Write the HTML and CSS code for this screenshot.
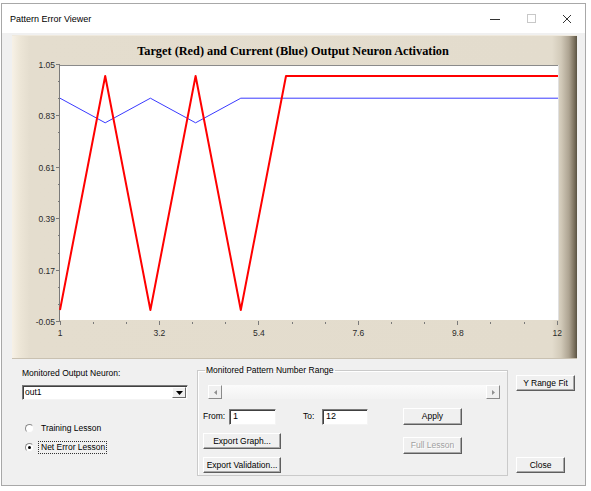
FILE: index.html
```html
<!DOCTYPE html>
<html>
<head>
<meta charset="utf-8">
<title>Pattern Error Viewer</title>
<link rel="stylesheet" href="styles.css">
</head>
<body>
<div class="window">
  <div class="titlebar">
    <span class="title">Pattern Error Viewer</span>
    <div class="caption-buttons">
      <span class="cap"><svg width="10" height="10" viewBox="0 0 10 10"><line x1="0" y1="5.5" x2="10" y2="5.5" stroke="#333" stroke-width="1"/></svg></span>
      <span class="cap"><svg width="9" height="9" viewBox="0 0 9 9"><rect x="0.5" y="0.5" width="8" height="8" fill="none" stroke="#c8c8c8" stroke-width="1"/></svg></span>
      <span class="cap"><svg width="10" height="10" viewBox="0 0 10 10"><path d="M1 1L9 9M9 1L1 9" stroke="#333" stroke-width="1" fill="none"/></svg></span>
    </div>
  </div>
  <div class="client">
    <div class="chart-panel">
      <svg class="chart" width="565" height="324" viewBox="0 0 565 324">
        <text class="ctitle" x="281" y="20" text-anchor="middle">Target (Red) and Current (Blue) Output Neuron Activation</text>
        <rect x="48" y="30" width="498" height="255" fill="#fff"/>
        <line x1="48" y1="30.5" x2="546" y2="30.5" stroke="#8a8a8a" stroke-width="1"/>
        <line x1="546.5" y1="30" x2="546.5" y2="285" stroke="#e0e0e0" stroke-width="1"/>
        <line x1="47.5" y1="30" x2="47.5" y2="287" stroke="#7a7a7a" stroke-width="1"/>
        <g stroke="#7a7a7a" stroke-width="1">
          <line x1="44" y1="29.5" x2="48" y2="29.5"/>
          <line x1="46" y1="46.5" x2="48" y2="46.5"/>
          <line x1="46" y1="63.5" x2="48" y2="63.5"/>
          <line x1="44" y1="80.5" x2="48" y2="80.5"/>
          <line x1="46" y1="97.5" x2="48" y2="97.5"/>
          <line x1="46" y1="114.5" x2="48" y2="114.5"/>
          <line x1="44" y1="132.5" x2="48" y2="132.5"/>
          <line x1="46" y1="149.5" x2="48" y2="149.5"/>
          <line x1="46" y1="166.5" x2="48" y2="166.5"/>
          <line x1="44" y1="183.5" x2="48" y2="183.5"/>
          <line x1="46" y1="200.5" x2="48" y2="200.5"/>
          <line x1="46" y1="218.5" x2="48" y2="218.5"/>
          <line x1="44" y1="235.5" x2="48" y2="235.5"/>
          <line x1="46" y1="252.5" x2="48" y2="252.5"/>
          <line x1="46" y1="269.5" x2="48" y2="269.5"/>
          <line x1="44" y1="286.5" x2="48" y2="286.5"/>
        </g>
        <g stroke="#7a7a7a" stroke-width="1">
          <line x1="48.5" y1="286" x2="48.5" y2="290"/>
          <line x1="81.5" y1="287" x2="81.5" y2="289"/>
          <line x1="114.5" y1="287" x2="114.5" y2="289"/>
          <line x1="147.5" y1="286" x2="147.5" y2="290"/>
          <line x1="180.5" y1="287" x2="180.5" y2="289"/>
          <line x1="213.5" y1="287" x2="213.5" y2="289"/>
          <line x1="246.5" y1="286" x2="246.5" y2="290"/>
          <line x1="280.5" y1="287" x2="280.5" y2="289"/>
          <line x1="313.5" y1="287" x2="313.5" y2="289"/>
          <line x1="346.5" y1="286" x2="346.5" y2="290"/>
          <line x1="379.5" y1="287" x2="379.5" y2="289"/>
          <line x1="412.5" y1="287" x2="412.5" y2="289"/>
          <line x1="445.5" y1="286" x2="445.5" y2="290"/>
          <line x1="478.5" y1="287" x2="478.5" y2="289"/>
          <line x1="512.5" y1="287" x2="512.5" y2="289"/>
          <line x1="545.5" y1="286" x2="545.5" y2="290"/>
        </g>
        <g class="axlbl" text-anchor="end">
          <text x="43" y="32.5">1.05</text>
          <text x="43" y="84">0.83</text>
          <text x="43" y="135.5">0.61</text>
          <text x="43" y="187">0.39</text>
          <text x="43" y="238.5">0.17</text>
          <text x="43" y="290">-0.05</text>
        </g>
        <g class="axlbl" text-anchor="middle">
          <text x="48" y="300.5">1</text>
          <text x="147.4" y="300.5">3.2</text>
          <text x="246.9" y="300.5">5.4</text>
          <text x="346.3" y="300.5">7.6</text>
          <text x="445.8" y="300.5">9.8</text>
          <text x="545.2" y="300.5">12</text>
        </g>
        <polyline points="48,63.2 93.2,87.8 138.4,63.2 183.6,87.8 228.8,63.2 546,63.2" fill="none" stroke="#3a3aff" stroke-width="1"/>
        <polyline points="48,275 93.2,41 138.4,275 183.6,41 228.8,275 274,41 546,41" fill="none" stroke="#ff0000" stroke-width="2" stroke-linejoin="round"/>
      </svg>
    </div>
    <div class="controls">
      <div class="col-left">
        <div class="lbl">Monitored Output Neuron:</div>
        <div class="combo">
          <span class="combo-text">out1</span>
          <span class="combo-btn"><svg width="7" height="4" viewBox="0 0 7 4"><path d="M0 0H7L3.5 4Z" fill="#000"/></svg></span>
        </div>
        <div class="radio first"><span class="radio-circle"></span><span class="radio-text">Training Lesson</span></div>
        <div class="radio second"><span class="radio-circle checked"></span><span class="radio-text focus">Net Error Lesson</span></div>
      </div>
      <fieldset class="group">
        <legend>Monitored Pattern Number Range</legend>
        <div class="scrollbar">
          <span class="sb-btn"><svg width="3" height="5" viewBox="0 0 3 5"><path d="M3 0V5L0 2.5Z" fill="#909090"/></svg></span>
          <span class="sb-track"></span>
          <span class="sb-btn"><svg width="3" height="5" viewBox="0 0 3 5"><path d="M0 0V5L3 2.5Z" fill="#909090"/></svg></span>
        </div>
        <div class="row-a">
          <span class="flabel from">From:</span>
          <span class="field w47">1</span>
          <span class="flabel to">To:</span>
          <span class="field w46">12</span>
          <span class="btn apply">Apply</span>
        </div>
        <div class="row-b">
          <div class="export-col">
            <span class="btn export">Export Graph...</span>
            <span class="btn export">Export Validation...</span>
          </div>
          <span class="btn full disabled">Full Lesson</span>
        </div>
      </fieldset>
      <div class="col-right">
        <span class="btn yfit">Y Range Fit</span>
        <span class="btn close">Close</span>
      </div>
    </div>
  </div>
</div>
</body>
</html>
```
FILE: styles.css
```css
* { box-sizing: border-box; }
html, body { margin: 0; padding: 0; background: #fff; }
body {
  width: 591px;
  height: 491px;
  overflow: hidden;
  font-family: "Liberation Sans", Arial, sans-serif;
  font-size: 8.5px;
  color: #000;
}
.window {
  margin: 3px 0 0 1px;
  width: 585px;
  height: 483px;
  border: 1px solid #a8a8a8;
  background: #f0f0f0;
  display: flex;
  flex-direction: column;
}
.titlebar {
  height: 29px;
  background: #fff;
  display: flex;
  align-items: center;
  padding-left: 8px;
  flex: none;
}
.title {
  font-size: 9px;
  color: #000;
}
.caption-buttons {
  margin-left: auto;
  display: flex;
}
.cap {
  width: 36px;
  height: 29px;
  display: flex;
  align-items: center;
  justify-content: center;
}
.client {
  flex: 1;
  padding: 2px 0 0 10px;
  display: flex;
  flex-direction: column;
}
.chart-panel {
  width: 565px;
  height: 324px;
  background: linear-gradient(to right, #f7f1e6 0px, #ede6d7 8px, #e4ddce 18px, #e3dccd 540px, #d2cab9 549px, #ada391 557px, #7d7360 562px, #5a5343 565px);
  box-shadow: inset 0 1px 0 #efe9dd, inset 0 -1px 0 #c9c1b1;
}
.chart { display: block; }
.ctitle {
  font-family: "Liberation Serif", "Times New Roman", serif;
  font-weight: bold;
  font-size: 12.3px;
  fill: #000;
}
.axlbl text {
  font-family: "Liberation Sans", Arial, sans-serif;
  font-size: 8.5px;
  fill: #2a2a2a;
}
.controls {
  display: flex;
  margin-left: 10px;
  flex: 1;
}
.col-left {
  width: 175px;
  padding-top: 9px;
}
.lbl { line-height: 11px; height: 11px; }
.combo {
  margin-top: 6px;
  width: 166px;
  height: 15px;
  background: #fff;
  border: 1px solid;
  border-color: #7a7a7a #f4f4f4 #f4f4f4 #7a7a7a;
  box-shadow: inset 1px 1px 0 #404040;
  display: flex;
  align-items: center;
}
.combo-text { padding-left: 2px; flex: 1; line-height: 11px; }
.combo-btn {
  width: 14px;
  height: 11px;
  margin-right: 1px;
  background: #f0f0f0;
  border: 1px solid;
  border-color: #fff #6a6a6a #6a6a6a #fff;
  display: flex;
  align-items: center;
  justify-content: center;
}
.radio {
  display: flex;
  align-items: center;
  height: 13px;
  line-height: 11px;
}
.radio.first { margin-top: 22px; }
.radio.second { margin-top: 6px; }
.radio-circle {
  width: 9px;
  height: 9px;
  border-radius: 50%;
  margin-left: 3px;
  background: #fff;
  border: 1px solid;
  border-color: #8a8a8a #f0f0f0 #f0f0f0 #8a8a8a;
  position: relative;
  flex: none;
}
.radio-circle.checked::after {
  content: "";
  position: absolute;
  left: 2px;
  top: 2px;
  width: 3px;
  height: 3px;
  border-radius: 50%;
  background: #000;
}
.radio-text { margin-left: 4px; padding: 0 1px 0 2px; border: 1px solid transparent; }
.radio-text.focus { border: 1px dotted #333; }
.group {
  margin: 6px 0 0 0;
  padding: 0 0 2px 0;
  width: 311px;
  height: 111px;
  border: 1px solid #cacaca;
  box-shadow: inset 1px 1px 0 #fff;
  min-inline-size: 0;
}
.group legend {
  margin-left: 7px;
  padding: 0 1px;
  line-height: 11px;
  font-size: 8.5px;
}
.scrollbar {
  margin: 9px 0 0 10px;
  width: 292px;
  height: 14px;
  display: flex;
  background: #f7f7f7;
}
.sb-btn {
  width: 14px;
  height: 14px;
  background: #f0f0f0;
  border: 1px solid;
  border-color: #fff #8a8a8a #8a8a8a #fff;
  display: flex;
  align-items: center;
  justify-content: center;
  flex: none;
}
.sb-track { flex: 1; background: linear-gradient(#fbfbfb, #f2f2f2); }
.row-a {
  margin-top: 9px;
  padding-left: 5px;
  display: flex;
  align-items: center;
  height: 17px;
}
.flabel { line-height: 11px; }
.from { width: 26px; }
.to { width: 19px; margin-left: 27px; }
.field {
  height: 16px;
  background: #fff;
  border: 1px solid;
  border-color: #7a7a7a #f4f4f4 #f4f4f4 #7a7a7a;
  box-shadow: inset 1px 1px 0 #404040;
  padding-left: 3px;
  line-height: 13px;
  font-size: 9px;
}
.w47 { width: 47px; }
.w46 { width: 46px; }
.btn {
  display: flex;
  align-items: center;
  justify-content: center;
  background: #f0f0f0;
  border: 1px solid;
  border-color: #fff #5e5e5e #5e5e5e #fff;
  box-shadow: inset -1px -1px 0 #a8a8a8;
  line-height: 11px;
  white-space: nowrap;
}
.apply { margin-left: 35px; width: 59px; height: 17px; }
.row-b {
  margin-top: 8px;
  padding-left: 5px;
  display: flex;
  align-items: flex-start;
}
.export-col { display: flex; flex-direction: column; gap: 8px; }
.export { width: 78px; height: 16px; }
.full { margin-left: 122px; margin-top: 4px; width: 59px; height: 17px; }
.disabled { color: #a0a0a0; text-shadow: 1px 1px 0 #fff; }
.col-right {
  margin-left: 8px;
  display: flex;
  flex-direction: column;
  align-items: flex-start;
}
.yfit { margin-top: 16px; width: 59px; height: 16px; }
.close { margin-top: 66px; width: 49px; height: 16px; }
```
